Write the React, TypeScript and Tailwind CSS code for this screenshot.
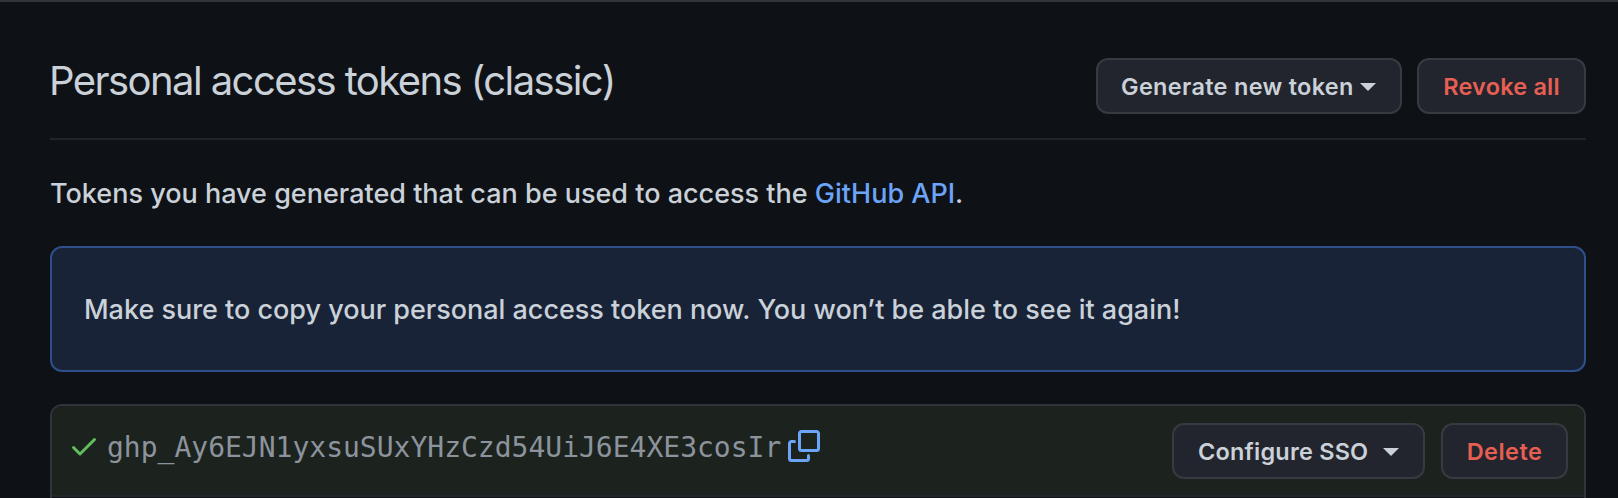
import type { ReactNode } from "react";

const buttonBase =
  "flex h-14 shrink-0 items-center rounded-xl border-2 border-[#363a41] bg-[#22252d] pt-0.5 text-[23.5px] leading-none font-semibold whitespace-nowrap";

function Button({ className, children }: { className: string; children: ReactNode }) {
  return (
    <button type="button" className={`${buttonBase} ${className}`}>
      {children}
    </button>
  );
}

function Caret({ className }: { className: string }) {
  return (
    <svg viewBox="0 0 16 8" className={`h-2 w-4 shrink-0 ${className}`} fill="currentColor" aria-hidden="true">
      <path d="M0 0h16L8 8z" />
    </svg>
  );
}

function CheckIcon() {
  return (
    <svg viewBox="0 0 16 16" className="h-8 w-8 shrink-0 text-[#62bd5c]" fill="currentColor" aria-hidden="true">
      <path d="M13.78 4.22a.75.75 0 010 1.06l-7.25 7.25a.75.75 0 01-1.06 0L2.22 9.28a.75.75 0 011.06-1.06L6 10.94l6.72-6.72a.75.75 0 011.06 0z" />
    </svg>
  );
}

function CopyIcon() {
  return (
    <svg viewBox="0 0 16 16" className="h-8 w-8 shrink-0 text-[#6ca4f8]" fill="currentColor" aria-hidden="true">
      <path d="M0 6.75C0 5.784.784 5 1.75 5h1.5a.75.75 0 010 1.5h-1.5a.25.25 0 00-.25.25v7.5c0 .138.112.25.25.25h7.5a.25.25 0 00.25-.25v-1.5a.75.75 0 011.5 0v1.5A1.75 1.75 0 019.25 16h-7.5A1.75 1.75 0 010 14.25v-7.5z" />
      <path d="M5 1.75C5 .784 5.784 0 6.75 0h7.5C15.216 0 16 .784 16 1.75v7.5A1.75 1.75 0 0114.25 11h-7.5A1.75 1.75 0 015 9.25v-7.5zm1.75-.25a.25.25 0 00-.25.25v7.5c0 .138.112.25.25.25h7.5a.25.25 0 00.25-.25v-7.5a.25.25 0 00-.25-.25h-7.5z" />
    </svg>
  );
}

export default function App() {
  return (
    <main className="h-[498px] w-full overflow-hidden border-t-2 border-[#30343b] bg-[#0e1116] pr-8 pl-[50px] font-['Inter',sans-serif] text-[#cad1d8]">
      <header className="flex h-[138px] items-start justify-between border-b-2 border-[#21252a] pt-14">
        <h2 className="-ml-px text-[40px] leading-[46px] font-normal tracking-[-1.57px] whitespace-nowrap">
          Personal access tokens (classic)
        </h2>
        <div className="flex gap-[15px]">
          <Button className="w-[306px] pl-[23px] tracking-[0.3px]">
            Generate new token
            <Caret className="ml-1.5" />
          </Button>
          <Button className="w-[169px] justify-center tracking-[0.2px] text-[#e65f52]">Revoke all</Button>
        </div>
      </header>

      <p className="mt-[33px] h-[41px] text-[27px] leading-[42px] font-medium whitespace-nowrap">
        Tokens you have generated that can be used to access the{" "}
        <a href="#" className="text-[#6ca4f8]">
          GitHub API
        </a>
        .
      </p>

      <div className="mt-8 flex h-[126px] items-center rounded-xl border-2 border-[#2f4f8a] bg-[#192337] pt-0.5 pl-8 text-[27px] leading-[42px] font-medium tracking-[-0.02px] whitespace-nowrap">
        Make sure to copy your personal access token now. You won’t be able to see it again!
      </div>

      <div className="mt-8 h-[120px] overflow-hidden rounded-t-xl border-2 border-[#30343b]">
        <div className="flex h-[91px] items-start border-b-2 border-[#22272b] bg-[#1c231e] pt-[17px] pr-4 pl-4">
          <div className="mt-[7px] flex h-8 items-start">
            <CheckIcon />
            <code className="mt-0.5 ml-[7px] font-['DejaVu_Sans_Mono',monospace] text-[28px] leading-8 text-[#8c939d]">
              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
            </code>
            <span className="ml-[7px]">
              <CopyIcon />
            </span>
          </div>
          <div className="ml-auto flex gap-4">
            <Button className="w-[253px] pl-6 tracking-[0.2px]">
              Configure SSO
              <Caret className="ml-[15px]" />
            </Button>
            <Button className="w-[127px] justify-center tracking-[0.45px] text-[#e65f52]">Delete</Button>
          </div>
        </div>
      </div>
    </main>
  );
}
